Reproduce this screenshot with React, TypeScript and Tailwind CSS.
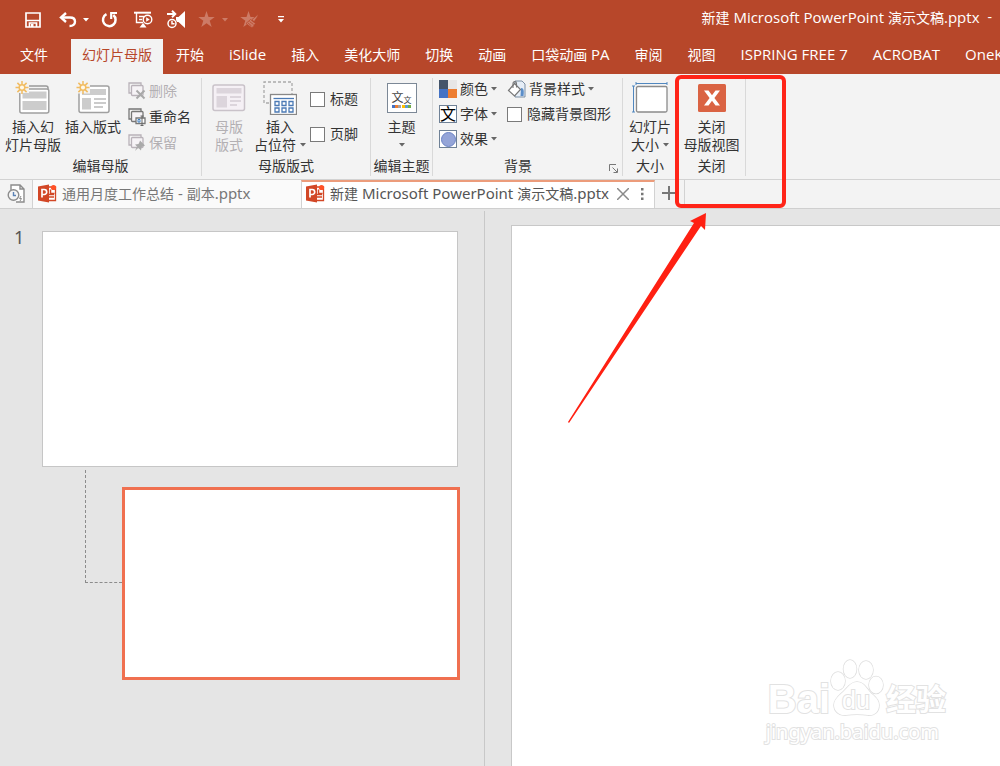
import type { ReactNode } from 'react';

function Caret({ className = 'text-[#666]' }: { className?: string }) {
  return (
    <svg viewBox="0 0 6 4" className={`h-1 w-1.5 shrink-0 ${className}`} fill="currentColor" aria-hidden="true">
      <path d="M0 0h6L3 3.5z" />
    </svg>
  );
}

/* Latin runs are set one pixel larger than the Chinese text around them. */
function MixedText({ text }: { text: string }) {
  return (
    <span className="whitespace-pre">
      {text.split(/([\x20-\x7e]+)/).map((run, i) =>
        i % 2 === 1 ? <span key={i} className="text-[15px]">{run}</span> : run
      )}
    </span>
  );
}

function SaveIcon() {
  return (
    <svg viewBox="0 0 16 16" className="h-4 w-4" fill="none" stroke="currentColor" strokeWidth="1.700" aria-hidden="true">
      <path d="M1 1h14v14H1zM1.500 8.500h13" />
      <path d="M4.500 15v-4h7v4" />
      <path d="M6 12h2.500v3H6z" fill="currentColor" stroke="none" />
    </svg>
  );
}

function UndoIcon() {
  return (
    <svg viewBox="0 0 18 16" className="h-4 w-[18px]" fill="none" stroke="currentColor" strokeWidth="2.4" aria-hidden="true">
      <path d="M7 1L2 5.5 7 10" />
      <path d="M2.5 5.5H11c3.4 0 5 1.800 5 4.200 0 2.700-2 4.300-5.500 4.300" />
    </svg>
  );
}

function RedoIcon() {
  return (
    <svg viewBox="0 0 17 17" className="h-[17px] w-[17px]" fill="none" stroke="currentColor" strokeWidth="2.5" aria-hidden="true">
      <path d="M5.500 3.200A6.300 6.300 0 1 0 12.300 4" />
      <path d="M10.200 8V2H16" strokeWidth="2.200" />
    </svg>
  );
}

function PresentIcon() {
  return (
    <svg viewBox="0 0 19 18" className="h-[18px] w-[19px]" fill="none" stroke="currentColor" strokeWidth="1.400" aria-hidden="true">
      <path d="M0 1.700h17" strokeWidth="2" />
      <path d="M2.500 2v9.500H9M5 5.500h5M5 8.500h3" />
      <circle cx="13.500" cy="8.500" r="4.300" />
      <path d="M12.200 6.200v4.600l3.500-2.300z" fill="currentColor" stroke="none" />
      <path d="M9 12l-3.500 4.500h7L10 13z" fill="currentColor" stroke="none" />
    </svg>
  );
}

function SoundIcon() {
  return (
    <svg viewBox="0 0 19 19" className="h-[19px] w-[19px]" fill="none" stroke="currentColor" strokeWidth="1.500" aria-hidden="true">
      <path d="M0 4h8M5 .8L8.300 4 5 7.200" strokeWidth="1.900" />
      <path d="M18 1v17l-6.500-6H9V7h2.500z" fill="currentColor" stroke="none" />
      <circle cx="5" cy="13.500" r="5.300" fill="#b7472a" stroke="none" />
      <circle cx="5" cy="13.500" r="4" />
      <path d="M5 11v2.800h2.500" />
    </svg>
  );
}

function StarIcon({ brush = false }: { brush?: boolean }) {
  return (
    <svg viewBox="0 0 18 17" className="h-[17px] w-[18px]" fill="currentColor" aria-hidden="true">
      <path d="M8.500 0l2 6h6.200l-5 3.700 2 6.300-5.200-3.800L3.300 16l2-6.300-5-3.700h6.200z" />
      {brush && (
        <g stroke="#b7472a" strokeWidth=".8">
          <path d="M18 3.500l-6 5 2 2.500 4-6zM10.500 8.500l5 4-3.500 4.500-6-4.500z" />
          <path d="M9.500 10.500l4 3M8 12l3.500 3" />
        </g>
      )}
    </svg>
  );
}

function Sun() {
  return (
    <g stroke="#f1bc62" strokeWidth="1.500" fill="#fff8e8">
      <path d="M7 0v13M.5 6.500h13M2.400 1.900l9.200 9.200M11.600 1.900l-9.200 9.200" />
      <circle cx="7" cy="6.500" r="2.800" />
    </g>
  );
}

function InsertMasterIcon() {
  return (
    <svg viewBox="0 0 36 34" className="h-[34px] w-9" fill="none" aria-hidden="true">
      <path d="M9 5h22q2 0 2 2v3" stroke="#999" strokeWidth="1.500" />
      <rect x="4.800" y="8" width="29" height="24" rx="2" fill="#fff" stroke="#a0a0a0" strokeWidth="1.500" />
      <path d="M7.500 10.500h24v7h-24zM7.500 20h24v9h-24z" fill="#ccc" />
      <path d="M1 2h13v10H1z" fill="#f3f3f3" />
      <Sun />
    </svg>
  );
}

function InsertLayoutIcon() {
  return (
    <svg viewBox="0 0 34 34" className="h-[34px] w-[34px]" fill="none" aria-hidden="true">
      <rect x="3" y="5" width="30" height="26.500" rx="2" fill="#fff" stroke="#a0a0a0" strokeWidth="1.500" />
      <path d="M6 8h24v6H6zM6 17h9v11.500H6z" fill="#ccc" />
      <path d="M18 18h12M18 22h12M18 26h9" stroke="#bbb" strokeWidth="1.300" />
      <path d="M0 1h14v11.500H0z" fill="#f3f3f3" />
      <Sun />
    </svg>
  );
}

function SlidesIcon({ kind }: { kind: 'delete' | 'rename' | 'keep' }) {
  const stroke = kind === 'rename' ? '#777' : '#b9b2b9';
  return (
    <svg viewBox="0 0 18 18" className="h-[18px] w-[18px] shrink-0" fill="none" stroke={stroke} strokeWidth="1.300" aria-hidden="true">
      <path d="M3 11H1V1h12v2" />
      <rect x="3.500" y="3.500" width="11.500" height="10" rx="1" fill="#f6f3f6" />
      {kind === 'delete' && <path d="M8.500 8.500l8 8M16.500 8.500l-8 8" stroke="#a9a9a9" strokeWidth="2" />}
      {kind === 'rename' && (
        <g>
          <path d="M8 10h9v5.500H8z" fill="#fff" stroke="#777" />
          <path d="M14 8v9.500M12.500 8h3M12.500 17.500h3" stroke="#666" strokeWidth="1" />
          <path d="M10 11.500v2.500h2v-2.500z" stroke="#3f7fbf" strokeWidth="1" />
        </g>
      )}
      {kind === 'keep' && (
        <g fill="#aaa" stroke="none">
          <path d="M12 6.500l5 5-1.500.8-2 .7-.5 3.500-6-6 3.500-.5 1-2z" />
          <path d="M9 12.500l1.300 1.300L7 17z" />
        </g>
      )}
    </svg>
  );
}

function MasterLayoutIcon() {
  return (
    <svg viewBox="0 0 34 28" className="h-7 w-[34px]" fill="none" aria-hidden="true">
      <rect x="1" y="1" width="31.500" height="25.500" rx="2" fill="#f5f0f5" stroke="#c9c2c9" strokeWidth="1.500" />
      <path d="M4.500 4h25v5.500h-25zM4.500 12H15v11.500H4.500z" fill="#dcd5dc" />
      <path d="M18 13h11M18 17h11M18 21h7" stroke="#d3ccd3" strokeWidth="1.300" />
    </svg>
  );
}

function PlaceholderIcon() {
  return (
    <svg viewBox="0 0 34 34" className="h-[34px] w-[34px]" fill="none" aria-hidden="true">
      <path d="M6 22H1V1h28v12" stroke="#aaa" strokeWidth="1.300" strokeDasharray="3 2" />
      <rect x="7.500" y="13.500" width="26" height="20" fill="#fff" stroke="#888" strokeWidth="1.300" />
      <path d="M10.500 17.500h20.500" stroke="#4b7ab5" strokeWidth="1.300" />
      <g stroke="#4b7ab5" strokeWidth="1.300">
        <path d="M12 20.500h4v4h-4zM19 20.500h4v4h-4zM26 20.500h4v4h-4zM12 27h4v4h-4zM19 27h4v4h-4zM26 27h4v4h-4z" />
      </g>
    </svg>
  );
}

function ThemeIcon() {
  return (
    <span className="relative flex h-[30px] w-[30px] items-center justify-center border border-[#7c8896] bg-white text-[#444]">
      <span className="text-xs leading-4">文</span>
      <span className="pt-1 text-[8px] leading-3">文</span>
      <span className="absolute inset-x-1 bottom-1 flex justify-between">
        <i className="size-[3px] bg-[#4472c4]" />
        <i className="size-[3px] bg-[#ed7d31]" />
        <i className="size-[3px] bg-[#a5a5a5]" />
        <i className="size-[3px] bg-[#ffc000]" />
        <i className="size-[3px] bg-[#5b9bd5]" />
        <i className="size-[3px] bg-[#70ad47]" />
      </span>
    </span>
  );
}

function ColorsIcon() {
  return (
    <span className="grid size-[18px] shrink-0 grid-cols-2">
      <i className="bg-[#44546a]" />
      <i className="bg-[#e7e6e6]" />
      <i className="bg-[#4472c4]" />
      <i className="bg-[#ed7d31]" />
    </span>
  );
}

function FontsIcon() {
  return (
    <span className="flex size-[18px] shrink-0 items-center justify-center border border-[#6f8196] bg-white text-base leading-4 text-black">
      文
    </span>
  );
}

function EffectsIcon() {
  return (
    <span className="flex size-[18px] shrink-0 items-center justify-center border border-[#6f8196] bg-white">
      <i className="size-[15px] rounded-full border border-[#6b83c5] bg-[#95a5d8]" />
    </span>
  );
}

function BucketIcon() {
  return (
    <svg viewBox="0 0 19 18" className="h-[18px] w-[19px] shrink-0" fill="none" aria-hidden="true">
      <path d="M8 1h7l3 3v13H8z" fill="#e6eef7" stroke="#7d8fa3" />
      <path d="M14 8c3 0 3 3 2.500 8h-3z" fill="#5b8ec9" />
      <path d="M7.500 3.500l6 6-6 6.500-6-5.500z" fill="#fff" stroke="#777" strokeWidth="1.200" />
      <path d="M6 8V3.500C6 1 9.500 1 9.500 3.500v4" stroke="#777" strokeWidth="1.100" />
    </svg>
  );
}

function SlideSizeIcon() {
  return (
    <svg viewBox="0 0 36 32" className="h-8 w-9" fill="none" aria-hidden="true">
      <rect x="4.500" y="4.500" width="30.500" height="25.500" rx="1.500" fill="#fff" stroke="#8b8b8b" strokeWidth="1.300" />
      <path d="M4 1.500h31M4 0v3M35 0v3M1.500 4v26M0 4h3M0 30h3" stroke="#5187bf" />
    </svg>
  );
}

function CloseMasterIcon() {
  return (
    <svg viewBox="0 0 28 28" className="size-7" aria-hidden="true">
      <rect width="28" height="28" rx="1.500" fill="#da6343" />
      <path d="M6 6.500h4.500l3.500 4.700 3.500-4.700H22L16.400 14l5.600 7.500h-4.500L14 16.800l-3.500 4.700H6l5.600-7.500z" fill="#fff" />
    </svg>
  );
}

function PptIcon() {
  return (
    <svg viewBox="0 0 19 19" className="size-[19px] shrink-0" aria-hidden="true">
      <path d="M9 3h8.500v13.500H9z" fill="#fff" stroke="#d24726" strokeWidth="1.300" />
      <path d="M11 10.500h5M11 13h5" stroke="#d24726" strokeWidth="1.300" />
      <path d="M0 2.500L11 .5v18L0 16.500z" fill="#d24726" />
      <path d="M4 13.500v-8h2.200a2.300 2.300 0 0 1 0 5H4" fill="none" stroke="#fff" strokeWidth="1.700" />
      <circle cx="15.500" cy="3.500" r="2.600" fill="#ff5126" />
      <path d="M12.500 5.500v4h4" fill="none" stroke="#d24726" strokeWidth="1.500" />
    </svg>
  );
}

function HistoryIcon() {
  return (
    <svg viewBox="0 0 19 20" className="h-5 w-[19px]" fill="none" stroke="#8c8c8c" strokeWidth="1.400" aria-hidden="true">
      <path d="M4 6V1h9l4 4v13H9M13 1v4h4" fill="#fff" />
      <circle cx="6.500" cy="11" r="5.300" fill="#f4f4f4" />
      <path d="M6.500 8v3.500H9" stroke="#5b82b5" />
      <path d="M14 12l-1.500 2.500h2L13 17" strokeWidth="1" />
    </svg>
  );
}

function Group({ label, className, children, launcher }: { label: string; className: string; children: ReactNode; launcher?: boolean }) {
  return (
    <section aria-label={label} className={`flex shrink-0 flex-col border-r border-[#d9d9d9] ${className}`}>
      <div className="flex h-[82px] items-start">{children}</div>
      <div className="flex items-center justify-center leading-5">
        <span className={launcher ? 'flex-1 pr-1.5 text-center' : ''}>{label}</span>
        {launcher && (
          <button aria-label="背景格式设置" className="mr-1 pt-1">
            <svg viewBox="0 0 9 9" className="size-[9px]" fill="none" stroke="#777" aria-hidden="true">
              <path d="M.5 7V.5H7M3.500 3.500L8 8M8.500 4.500v4h-4" />
            </svg>
          </button>
        )}
      </div>
    </section>
  );
}

function BigButton({ icon, lines, caret, disabled, className = '' }: { icon: ReactNode; lines: string[]; caret?: boolean; disabled?: boolean; className?: string }) {
  return (
    <button disabled={disabled} className={`flex shrink-0 flex-col items-center leading-[18px] disabled:text-[#b3b0b3] ${className}`}>
      <span className="flex h-10 items-center">{icon}</span>
      {lines.map((line, i) => (
        <span key={line} className="flex items-center gap-1 whitespace-nowrap">
          {line}
          {caret && i === lines.length - 1 && <Caret />}
        </span>
      ))}
    </button>
  );
}

function SmallButton({ icon, label, caret, disabled }: { icon: ReactNode; label: string; caret?: boolean; disabled?: boolean }) {
  return (
    <button disabled={disabled} className="flex items-center gap-[3px] whitespace-nowrap leading-[18px] disabled:text-[#b3b0b3]">
      {icon}
      {label}
      {caret && <Caret />}
    </button>
  );
}

function Check({ id, label }: { id: string; label: string }) {
  return (
    <label htmlFor={id} className="flex items-center gap-[5px] whitespace-nowrap leading-[18px]">
      <input id={id} type="checkbox" className="size-[15px] shrink-0 appearance-none border border-[#7a7a7a] bg-white checked:bg-[#da6343]" />
      {label}
    </label>
  );
}

const menuTabs = ['开始', 'iSlide', '插入', '美化大师', '切换', '动画', '口袋动画 PA', '审阅', '视图', 'ISPRING FREE 7', 'ACROBAT', 'OneK'];

function TitleBar() {
  return (
    <div className="flex h-[39px] items-center justify-between pr-2 pl-[25px] text-white">
      <div className="flex items-center">
        <button aria-label="保存"><SaveIcon /></button>
        <button aria-label="撤消" className="ml-[18px]"><UndoIcon /></button>
        <button aria-label="撤消选项" className="ml-1.5"><Caret className="text-white" /></button>
        <button aria-label="重复" className="ml-3"><RedoIcon /></button>
        <button aria-label="从头开始放映" className="ml-4"><PresentIcon /></button>
        <button aria-label="声音" className="ml-3.5"><SoundIcon /></button>
        <button aria-label="添加动画" disabled className="ml-3 text-[#cd7b66]"><StarIcon /></button>
        <button aria-label="动画选项" disabled className="ml-1.5"><Caret className="text-[#cd7b66]" /></button>
        <button aria-label="动画刷" disabled className="ml-3 text-[#cd7b66]"><StarIcon brush /></button>
        <button aria-label="自定义快速访问工具栏" className="ml-5">
          <svg viewBox="0 0 6 7" className="h-[7px] w-1.5" fill="currentColor" aria-hidden="true">
            <path d="M0 0h6v1.300H0zM0 3h6L3 6.500z" />
          </svg>
        </button>
      </div>
      <div className="flex gap-2 pb-1 whitespace-nowrap">
        <h1><MixedText text="新建 Microsoft PowerPoint 演示文稿.pptx" /></h1>
        <span>-</span>
      </div>
    </div>
  );
}

function MenuBar() {
  return (
    <nav className="flex h-[35px] items-stretch overflow-hidden pl-2 whitespace-nowrap text-white">
      <button className="mr-[11px] px-3 pb-1">文件</button>
      <button className="mr-px bg-[#f3f3f3] px-[11px] pb-1 text-[#b7472a]">幻灯片母版</button>
      {menuTabs.map((tab) => (
        <button key={tab} className="mr-px shrink-0 px-3 pb-1"><MixedText text={tab} /></button>
      ))}
    </nav>
  );
}

function Ribbon() {
  return (
    <div className="flex h-[106px] overflow-hidden border-b border-[#d2d2d2] bg-[#f3f3f3] pt-1 pb-[3px]">
      <Group label="编辑母版" className="w-[202px]">
        <BigButton icon={<InsertMasterIcon />} lines={['插入幻', '灯片母版']} className="ml-[5px]" />
        <BigButton icon={<InsertLayoutIcon />} lines={['插入版式']} className="ml-1" />
        <div className="ml-[7px] flex flex-col gap-2 pt-1">
          <SmallButton icon={<SlidesIcon kind="delete" />} label="删除" disabled />
          <SmallButton icon={<SlidesIcon kind="rename" />} label="重命名" />
          <SmallButton icon={<SlidesIcon kind="keep" />} label="保留" disabled />
        </div>
      </Group>
      <Group label="母版版式" className="w-[169px]">
        <BigButton icon={<MasterLayoutIcon />} lines={['母版', '版式']} disabled className="ml-2.5" />
        <BigButton icon={<PlaceholderIcon />} lines={['插入', '占位符']} caret className="ml-2" />
        <div className="ml-1 flex flex-col gap-[17px] pt-3">
          <Check id="title" label="标题" />
          <Check id="footer" label="页脚" />
        </div>
      </Group>
      <Group label="编辑主题" className="w-[62px]">
        <button className="mx-auto flex flex-col items-center leading-[18px]">
          <span className="flex h-10 items-center"><ThemeIcon /></span>
          主题
          <span className="flex h-[18px] items-center"><Caret /></span>
        </button>
      </Group>
      <Group label="背景" className="w-[190px]" launcher>
        <div className="ml-1.5 flex flex-col gap-[7px] pt-0.5">
          <SmallButton icon={<ColorsIcon />} label="颜色" caret />
          <SmallButton icon={<FontsIcon />} label="字体" caret />
          <SmallButton icon={<EffectsIcon />} label="效果" caret />
        </div>
        <div className="ml-2.5 flex flex-col gap-[7px] pt-0.5">
          <SmallButton icon={<BucketIcon />} label="背景样式" caret />
          <Check id="hide-bg" label="隐藏背景图形" />
        </div>
      </Group>
      <Group label="大小" className="w-[55px]">
        <BigButton icon={<SlideSizeIcon />} lines={['幻灯片', '大小']} caret className="mx-auto" />
      </Group>
      <Group label="关闭" className="w-[68px]">
        <BigButton icon={<CloseMasterIcon />} lines={['关闭', '母版视图']} className="mx-auto" />
      </Group>
    </div>
  );
}

function DocumentTabs() {
  return (
    <div className="flex h-[29px] items-stretch border-b border-[#cfcfcf] bg-[#f3f3f3] whitespace-nowrap">
      <button aria-label="历史文档" className="flex w-[33px] items-center justify-center border-r border-[#d2d2d2]"><HistoryIcon /></button>
      <button className="flex w-[268px] items-center gap-[5px] bg-[#fafafa] pb-px pl-[5px] text-[#777]">
        <PptIcon />
        <MixedText text="通用月度工作总结 - 副本.pptx" />
      </button>
      <div className="flex w-[354px] items-center border-x border-t-2 border-x-[#d2d2d2] border-t-[#ec9c7b] bg-white pb-0.5 pl-1 text-[#555]">
        <button className="flex items-center gap-[5px]">
          <PptIcon />
          <MixedText text="新建 Microsoft PowerPoint 演示文稿.pptx" />
        </button>
        <button aria-label="关闭文档" className="ml-auto">
          <svg viewBox="0 0 12 12" className="size-3" stroke="#8a8a8a" strokeWidth="1.500" aria-hidden="true"><path d="M0 0l12 12M12 0L0 12" /></svg>
        </button>
        <button aria-label="更多" className="mr-2.5 ml-3">
          <svg viewBox="0 0 3 12" className="h-3 w-[3px]" fill="#777" aria-hidden="true"><path d="M0 0h2.500v2.500H0zM0 4.700h2.500v2.500H0zM0 9.400h2.500v2.500H0z" /></svg>
        </button>
      </div>
      <button aria-label="新建文档" className="flex w-[30px] items-center justify-center border-r border-[#d2d2d2] pr-0.5 pb-0.5">
        <svg viewBox="0 0 14 14" className="size-3.5" stroke="#777" strokeWidth="2" aria-hidden="true"><path d="M7 0v14M0 7h14" /></svg>
      </button>
    </div>
  );
}

function Watermark() {
  return (
    <div className="absolute right-[54px] bottom-5 flex flex-col text-white [paint-order:stroke_fill] [-webkit-text-stroke:2px_#e2e2e2]">
      <div className="flex items-end">
        <span className="pl-0.5 font-['Liberation_Sans',sans-serif] text-[40px] leading-[38px] font-bold">Bai</span>
        <span className="relative flex h-[60px] w-[52px] items-end justify-center pb-1">
          <svg viewBox="0 0 54 60" className="absolute inset-0 h-[60px] w-[54px]" fill="#fff" stroke="#dedede" strokeWidth="1.500" aria-hidden="true">
            <ellipse cx="8" cy="23" rx="7" ry="9" />
            <ellipse cx="20" cy="11" rx="6.500" ry="9" />
            <ellipse cx="36" cy="12" rx="7" ry="9" />
            <ellipse cx="46" cy="27" rx="7" ry="8.500" />
            <path d="M27 24c6 0 9 5 12 9s10 7 10 14-5 11-11 10c-7-1-15-1-22 0C9 58 4 53 4 47s6-10 10-14 7-9 13-9z" />
          </svg>
          <span className="relative font-['Liberation_Sans',sans-serif] text-[25px] leading-7">du</span>
        </span>
        <span className="pl-1 text-[30px] leading-[38px] font-bold">经验</span>
      </div>
      <span className="text-xl leading-7">jingyan.baidu.com</span>
    </div>
  );
}

function Workspace() {
  return (
    <main className="flex flex-1 bg-[#e5e5e5]">
      <aside className="mt-0.5 w-[485px] shrink-0 border-r border-[#c8c8c8] pt-5">
        <div className="flex items-start">
          <span className="w-[42px] pl-3.5 text-lg leading-3 text-[#555]">1</span>
          <div className="h-[236px] w-[416px] border border-[#c6c6c6] bg-white" />
        </div>
        <div className="flex items-start pl-[85px]">
          <div className="mt-[3px] h-[113px] w-[37px] border-b border-l border-dashed border-[#8c8c8c]" />
          <div className="mt-5 h-[193px] w-[338px] border-3 border-[#f07050] bg-white" />
        </div>
      </aside>
      <div className="mt-4 ml-[26px] flex-1 border-t border-l border-[#c8c8c8] bg-white" />
    </main>
  );
}

export default function App() {
  return (
    <div className="relative flex min-h-screen flex-col overflow-hidden bg-[#e5e5e5] font-['Noto_Sans','Noto_Sans_CJK_SC',sans-serif] text-sm text-[#333]">
      <header className="bg-[#b7472a] font-['Open_Sans','Noto_Sans_CJK_SC',sans-serif]">
        <TitleBar />
        <MenuBar />
      </header>
      <Ribbon />
      <DocumentTabs />
      <Workspace />
      <Watermark />
      <div className="pointer-events-none absolute top-[75px] left-[675px] h-[133px] w-[111px] rounded-md border-4 border-[#ff2418]" />
      <svg viewBox="0 0 142 212" className="pointer-events-none absolute top-[212px] left-[567px] h-[212px] w-[142px]" fill="#ff2012" aria-hidden="true">
        <path d="M139 1L138 18 134 14 2 211 1 210 127 11 123 9z" />
      </svg>
    </div>
  );
}
